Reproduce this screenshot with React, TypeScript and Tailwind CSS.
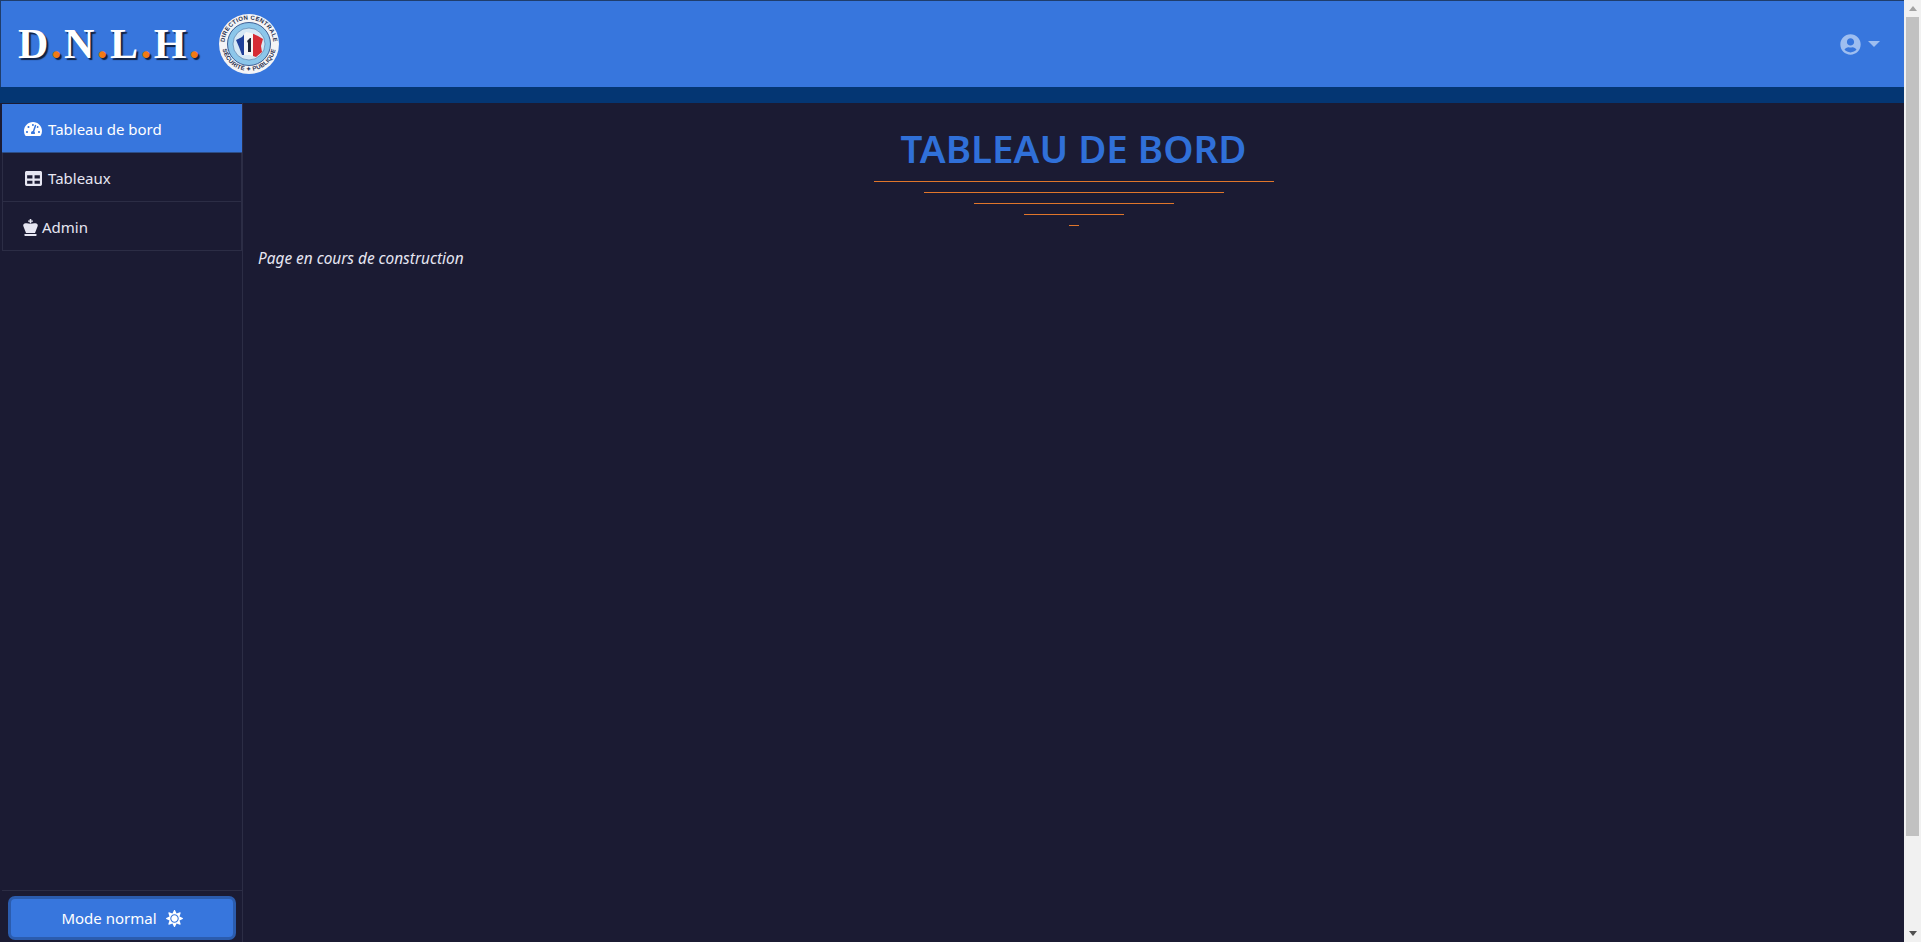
import { FaTachometerAlt, FaTable, FaSun, FaUserCircle } from "react-icons/fa";

function King() {
  return (
    <svg width="15" height="17" viewBox="0 0 15 17" fill="currentColor" className="block">
      <path d="M6.7 0h1.6v1.4h1.6v1.4H8.3v1.6H6.7V2.8H5.100V1.400h1.600z" />
      <path d="M1.500 4.600C3 3.900 5.500 4.200 7.500 5C9.500 4.200 12 3.900 13.500 4.600C14.500 5 15 6 14.700 7L12 14H3L.3 7C0 6 .5 5 1.500 4.600z" />
      <rect x="1.500" y="15" width="12" height="2" rx="0.4" />
    </svg>
  );
}

function Logo() {
  return (
    <svg width="60" height="60" viewBox="0 0 60 60" className="shrink-0">
      <defs>
        <path id="logoTop" d="M5.500 30 A24.500 24.500 0 0 1 54.500 30" />
        <path id="logoBottom" d="M3 30 A27 27 0 0 0 57 30" />
      </defs>
      <circle cx="30" cy="30" r="30" fill="#f4f4f6" />
      <circle cx="30" cy="30" r="21.500" fill="#8cc6ea" stroke="#1d3f7c" strokeWidth="0.8" />
      <circle cx="30" cy="30" r="16" fill="#d6e8f5" stroke="#47709f" strokeWidth="0.6" />
      <text fontSize="6" fontFamily="Liberation Sans, sans-serif" fontWeight="700" fill="#27304f" letterSpacing="0.3">
        <textPath href="#logoTop" startOffset="50%" textAnchor="middle">DIRECTION CENTRALE</textPath>
      </text>
      <text fontSize="6" fontFamily="Liberation Sans, sans-serif" fontWeight="700" fill="#27304f" letterSpacing="0.2">
        <textPath href="#logoBottom" startOffset="50%" textAnchor="middle">SÉCURITÉ ✦ PUBLIQUE</textPath>
      </text>
      <path d="M17 26 L23 23 L27 18 L32 19 L39 22 L44 25 L42 32 L43 38 L37 43 L30 41 L23 41 L20 33 Z" fill="#f5f5f5" />
      <path d="M17 26 L23 23 L25 20.500 L25 41 L23 41 L20 33 Z" fill="#1f3f98" />
      <path d="M34 19.800 L39 22 L44 25 L42 32 L43 38 L37 43 L34 42 Z" fill="#d52b34" />
      <path d="M28 27 L31 24 L32 24 L32 38 L29 38 L29 29 Z" fill="#1d2438" />
    </svg>
  );
}

function NavItem({ icon, label, active, iconClass }: { icon: React.ReactNode; label: string; active?: boolean; iconClass: string }) {
  return (
    <div
      className={
        "flex h-[49px] items-center border-b pt-[2px] " +
        (active ? "bg-[#3776dd] text-white border-[#2c4d86]" : "border-x text-[#e6e6f2] border-[#2c2d45]")
      }
    >
      <span className={iconClass}>{icon}</span>
      <span className="text-[15px]">{label}</span>
    </div>
  );
}

export default function App() {
  const lines = ["w-[400px]", "w-[300px]", "w-[200px]", "w-[100px]", "w-[10px]"];
  return (
    <div className="flex h-[942px] w-[1921px] overflow-hidden bg-[#1b1b33] font-['Noto_Sans',sans-serif]">
      <div className="flex min-w-0 flex-1 flex-col">
        <header className="flex h-[87px] shrink-0 items-center justify-between border-t border-l border-[#1f3d6b] bg-[#3776dd] pl-[17px] pr-[24px]">
          <div className="flex items-center gap-[17px]">
            <div className="font-['Liberation_Serif',serif] text-[42px] font-bold leading-none tracking-[2.6px] text-white [text-shadow:2px_2px_1px_#10203f]">
              D<span className="text-[#f27a14]">.</span>N<span className="text-[#f27a14]">.</span>L<span className="text-[#f27a14]">.</span>H<span className="text-[#f27a14]">.</span>
            </div>
            <Logo />
          </div>
          <div className="flex items-center gap-[7px] text-[#9ebef0]">
            <FaUserCircle className="text-[21px]" />
            <div className="h-0 w-0 border-x-[6px] border-t-[6px] border-x-transparent border-t-[#9ebef0]" />
          </div>
        </header>
        <div className="h-[16px] shrink-0 bg-[#043673]" />
        <div className="flex min-h-0 flex-1">
          <aside className="flex w-[243px] shrink-0 flex-col justify-between border-r border-[#2c2d45] pl-[2px] pt-[1px]">
            <nav>
              <NavItem active label="Tableau de bord" icon={<FaTachometerAlt />} iconClass="mr-[6px] ml-[22px] text-[18px]" />
              <NavItem label="Tableaux" icon={<FaTable />} iconClass="mr-[6px] ml-[22px] text-[17px]" />
              <NavItem label="Admin" icon={<King />} iconClass="mr-[4px] ml-[20px]" />
            </nav>
            <div className="flex h-[52px] items-start border-t border-[#2c2d45] px-[6px] pt-[5px]">
              <button className="flex h-[44px] w-[228px] items-center justify-center gap-[9px] rounded-[7px] border-[3px] border-[#2b5cae] bg-[#3776dd] text-[15px] text-white">
                Mode normal
                <FaSun className="text-[17px]" />
              </button>
            </div>
          </aside>
          <main className="min-w-0 flex-1 px-[15px] pt-[20px]">
            <h1 className="text-center text-[38.5px] font-semibold leading-[50px] text-[#3070d8]">TABLEAU DE BORD</h1>
            <div className="mt-[8px] flex flex-col items-center gap-[10px]">
              {lines.map((w) => (
                <div key={w} className={w + " h-px bg-[#e0762b]"} />
              ))}
            </div>
            <p className="mt-[21px] text-[15.4px] italic text-[#e6e6f2]">Page en cours de construction</p>
          </main>
        </div>
      </div>
      <div className="flex w-[17px] shrink-0 flex-col bg-[#f1f1f1]">
        <div className="flex h-[17px] items-center justify-center">
          <div className="h-0 w-0 border-x-[4px] border-b-[5px] border-x-transparent border-b-[#a3a3a3]" />
        </div>
        <div className="mx-[2px] h-[819px] bg-[#c1c1c1]" />
        <div className="flex-1" />
        <div className="flex h-[17px] items-center justify-center">
          <div className="h-0 w-0 border-x-[4px] border-t-[5px] border-x-transparent border-t-[#505050]" />
        </div>
      </div>
    </div>
  );
}
